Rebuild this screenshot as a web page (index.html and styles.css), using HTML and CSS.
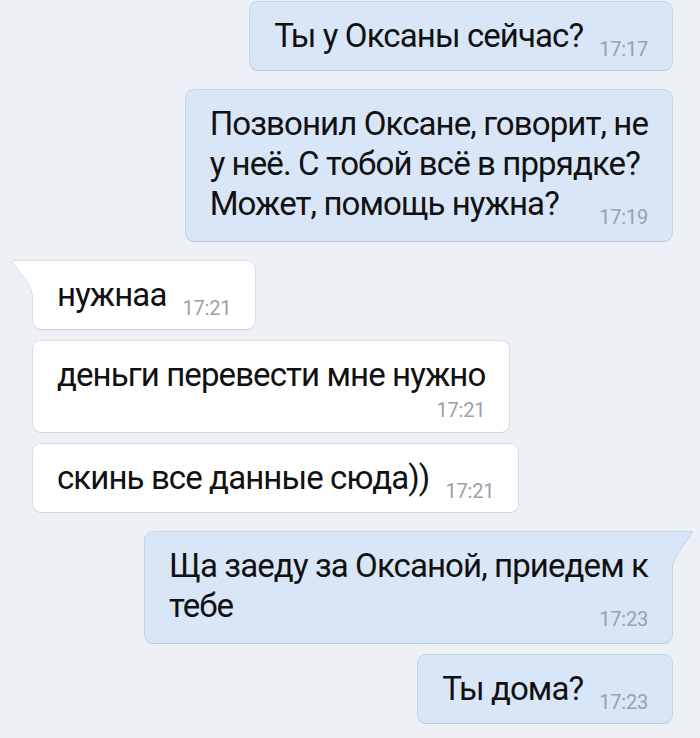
FILE: index.html
```html
<!DOCTYPE html>
<html>
<head>
  <meta charset="utf-8">
  <title>Сообщения</title>
  <link rel="stylesheet" href="styles.css">
</head>
<body>
  <div class="chat">
    <div class="msg out">
      <div class="last"><span class="text">Ты у Оксаны сейчас?</span><span class="time">17:17</span></div>
    </div>

    <div class="msg out group multi">
      <div class="line">Позвонил Оксане, говорит, не</div>
      <div class="line">у неё. С тобой всё в пррядке?</div>
      <div class="last"><span class="text">Может, помощь нужна?</span><span class="time">17:19</span></div>
    </div>

    <div class="msg in group first">
      <svg class="tail" width="22" height="34" viewBox="0 0 22 34">
        <path class="tail-fill" d="M22 0 H3 Q0 0 1.5 2 L12 17 Q20 27 21 34 H22 Z"/>
        <path class="tail-edge" d="M22 0.5 H3 Q0.5 0.5 2 2.5 L12.5 17 Q20 27 21 34"/>
      </svg>
      <div class="last"><span class="text">нужнаа</span><span class="time">17:21</span></div>
    </div>

    <div class="msg in">
      <div class="line">деньги перевести мне нужно</div>
      <div class="stamp">17:21</div>
    </div>

    <div class="msg in">
      <div class="last"><span class="text">скинь все данные сюда))</span><span class="time">17:21</span></div>
    </div>

    <div class="msg out group first multi">
      <svg class="tail" width="22" height="34" viewBox="0 0 22 34">
        <path class="tail-fill" d="M0 0 H19 Q22 0 20.5 2 L10 17 Q2 27 1 34 H0 Z"/>
        <path class="tail-edge" d="M0 0.5 H19 Q21.5 0.5 20 2.5 L9.5 17 Q2 27 1 34"/>
      </svg>
      <div class="line">Ща заеду за Оксаной, приедем к</div>
      <div class="last"><span class="text">тебе</span><span class="time">17:23</span></div>
    </div>

    <div class="msg out">
      <div class="last"><span class="text">Ты дома?</span><span class="time">17:23</span></div>
    </div>
  </div>
</body>
</html>
```

FILE: styles.css
```css
body {
  margin: 0;
  background-color: #edf0f4;
  font-family: Roboto, 'Noto Sans', sans-serif;
}
.chat {
  display: flex;
  flex-direction: column;
  gap: 10px;
  padding-top: 1px;
}
.msg {
  position: relative;
  padding: 14px 24px;
  border-radius: 9px;
  font-size: 33px;
  line-height: 40px;
  letter-spacing: -0.9px;
  color: #111;
  white-space: nowrap;
}
.msg.group {
  margin-top: 8px;
}
.msg.multi {
  padding-bottom: 17px;
}
.out {
  align-self: flex-end;
  margin-right: 27px;
  background-color: #d9e6f7;
  border: 1px solid #c6d4e6;
  border-bottom-color: #b9c8dc;
}
.in {
  align-self: flex-start;
  margin-left: 32px;
  background-color: #fff;
  border: 1px solid #d9dee4;
  border-bottom-color: #cdd3da;
}
.out.first {
  border-top-right-radius: 0;
}
.in.first {
  border-top-left-radius: 0;
}
.tail {
  position: absolute;
  top: -1px;
}
.out .tail {
  right: -22px;
}
.in .tail {
  left: -22px;
}
.out .tail-fill {
  fill: #d9e6f7;
}
.out .tail-edge {
  fill: none;
  stroke: #c6d4e6;
}
.in .tail-fill {
  fill: #fff;
}
.in .tail-edge {
  fill: none;
  stroke: #d9dee4;
}
.last {
  display: flex;
  align-items: flex-end;
  justify-content: space-between;
  gap: 16px;
}
.time {
  font-size: 20px;
  line-height: 13px;
  letter-spacing: -0.2px;
  color: #9aa1a9;
}
.stamp {
  padding-top: 7px;
  text-align: right;
  font-size: 20px;
  line-height: 16px;
  letter-spacing: -0.2px;
  color: #9aa1a9;
}
```
